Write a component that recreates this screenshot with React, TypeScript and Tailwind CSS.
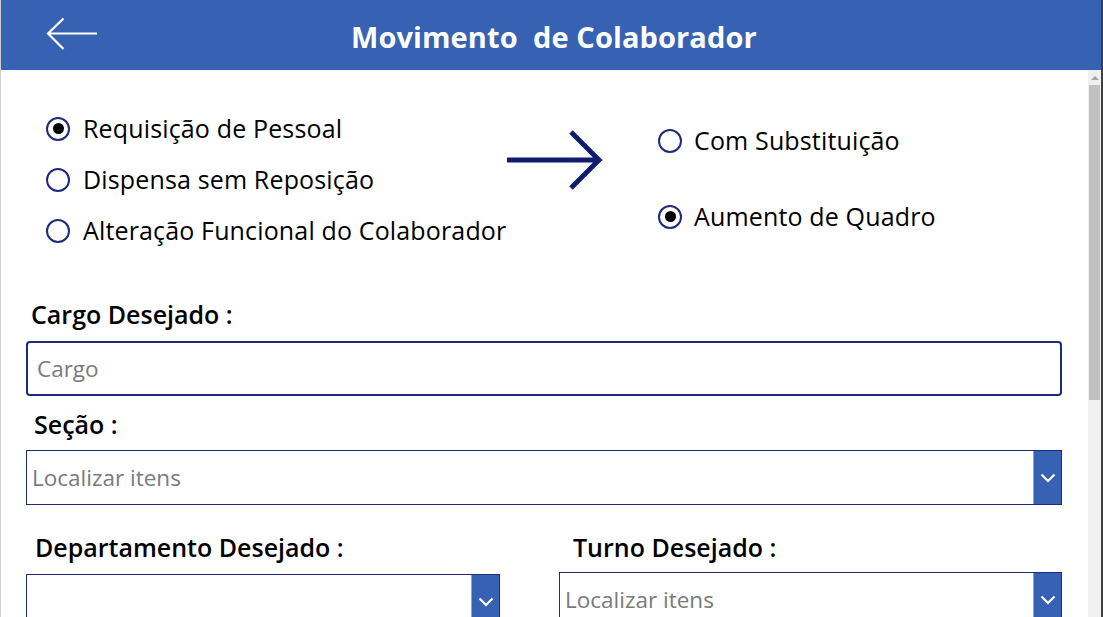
import React from 'react';

const font = { fontFamily: '"Open Sans", "Noto Sans", sans-serif' };

const Radio = ({ checked }: { checked?: boolean }) => (
  <span className="flex h-[24px] w-[24px] shrink-0 items-center justify-center rounded-full border-2 border-[#1f2a78] bg-white">
    {checked && <span className="h-[11px] w-[11px] rounded-full bg-black" />}
  </span>
);

const RadioRow = ({ label, checked, gap }: { label: string; checked?: boolean; gap: string }) => (
  <div className={`flex h-[51px] items-center ${gap}`}>
    <Radio checked={checked} />
    <span className="text-[25px] leading-none tracking-[0.15px] text-black">{label}</span>
  </div>
);

const Chevron = () => (
  <svg width="16" height="10" viewBox="0 0 16 10" fill="none">
    <path d="M1.5 1.5 L8 8 L14.5 1.5" stroke="white" strokeWidth="2.2" />
  </svg>
);

const Dropdown = ({ placeholder, className }: { placeholder?: string; className: string }) => (
  <div className={`flex h-[55px] border-[1.5px] border-[#1f2a78] bg-white ${className}`}>
    <div className="flex flex-1 items-center pl-[5px] text-[22.5px] text-[#7a7a7a]">{placeholder}</div>
    <div className="flex w-[28px] items-center justify-center border-l border-[#8aa2d6] bg-[#3761b3]">
      <Chevron />
    </div>
  </div>
);

const Label = ({ text, className }: { text: string; className: string }) => (
  <div className={`h-[32px] text-[25px] font-semibold leading-[32px] text-black ${className}`}>{text}</div>
);

export default function App() {
  return (
    <div className="flex h-screen w-full overflow-hidden border-l border-[#cfcfcf] bg-white" style={font}>
      <div className="flex w-[1100px] flex-col">
        <header className="flex h-[70px] shrink-0 items-center bg-[#3761b3]">
          <div className="ml-[45px] w-[52px]">
            <svg width="52" height="34" viewBox="0 0 52 34" fill="none">
              <path d="M2 15.5 H51 M17.5 0.5 L2 15.5 L17.5 31" stroke="white" strokeWidth="2.2" />
            </svg>
          </div>
          <h1 className="ml-[253px] pt-[3px] text-[29px] font-bold tracking-[0.1px] text-white whitespace-pre">Movimento  de Colaborador</h1>
        </header>

        <div className="flex flex-1">
          <main className="flex-1">
            <section className="flex items-start pl-[45px]">
              <div className="mt-[33px] flex w-[461px] flex-col">
                <RadioRow gap="gap-[13px]" checked label="Requisição de Pessoal" />
                <RadioRow gap="gap-[13px]" label="Dispensa sem Reposição" />
                <RadioRow gap="gap-[13px]" label="Alteração Funcional do Colaborador" />
              </div>
              <svg className="mt-[60px]" width="96" height="60" viewBox="0 0 96 60" fill="none">
                <path d="M0 30 H92 M64 2 L92 30 L64 58" stroke="#0f1c6e" strokeWidth="5" />
              </svg>
              <div className="ml-[55px] mt-[45px] flex flex-col gap-[25px]">
                <RadioRow gap="gap-[12px]" label="Com Substituição" />
                <RadioRow gap="gap-[12px]" checked label="Aumento de Quadro" />
              </div>
            </section>

            <section className="pl-[25px] pr-[26px] pt-[42px]">
              <Label text="Cargo Desejado :" className="ml-[5px]" />
              <div className="mt-[11px] flex h-[55px] items-center rounded-[4px] border-2 border-[#1f2a78] pl-[9px] text-[22.5px] text-[#7a7a7a]">
                Cargo
              </div>
              <Label text="Seção :" className="ml-[8px] mt-[12px]" />
              <Dropdown className="mt-[10px]" placeholder="Localizar itens" />
              <div className="mt-[26px] grid grid-cols-[474px_1fr] gap-x-[59px]">
                <div>
                  <Label text="Departamento Desejado :" className="ml-[9px]" />
                  <Dropdown className="mt-[11px]" />
                </div>
                <div>
                  <Label text="Turno Desejado :" className="ml-[14px]" />
                  <Dropdown className="mt-[9px]" placeholder="Localizar itens" />
                </div>
              </div>
            </section>
          </main>

          <aside className="flex w-[13px] flex-col items-center bg-[#f0f0f0]">
            <div className="mt-[6px] h-0 w-0 border-x-[4px] border-b-[4px] border-x-transparent border-b-[#a3a3a3]" />
            <div className="mt-[5px] h-[315px] w-[11px] bg-[#c1c1c1]" />
            <div className="mt-auto mb-[5px] h-0 w-0 border-x-[4px] border-t-[4px] border-x-transparent border-t-[#606060]" />
          </aside>
        </div>
      </div>
      <div className="w-[2px] bg-[#404040]" />
    </div>
  );
}
